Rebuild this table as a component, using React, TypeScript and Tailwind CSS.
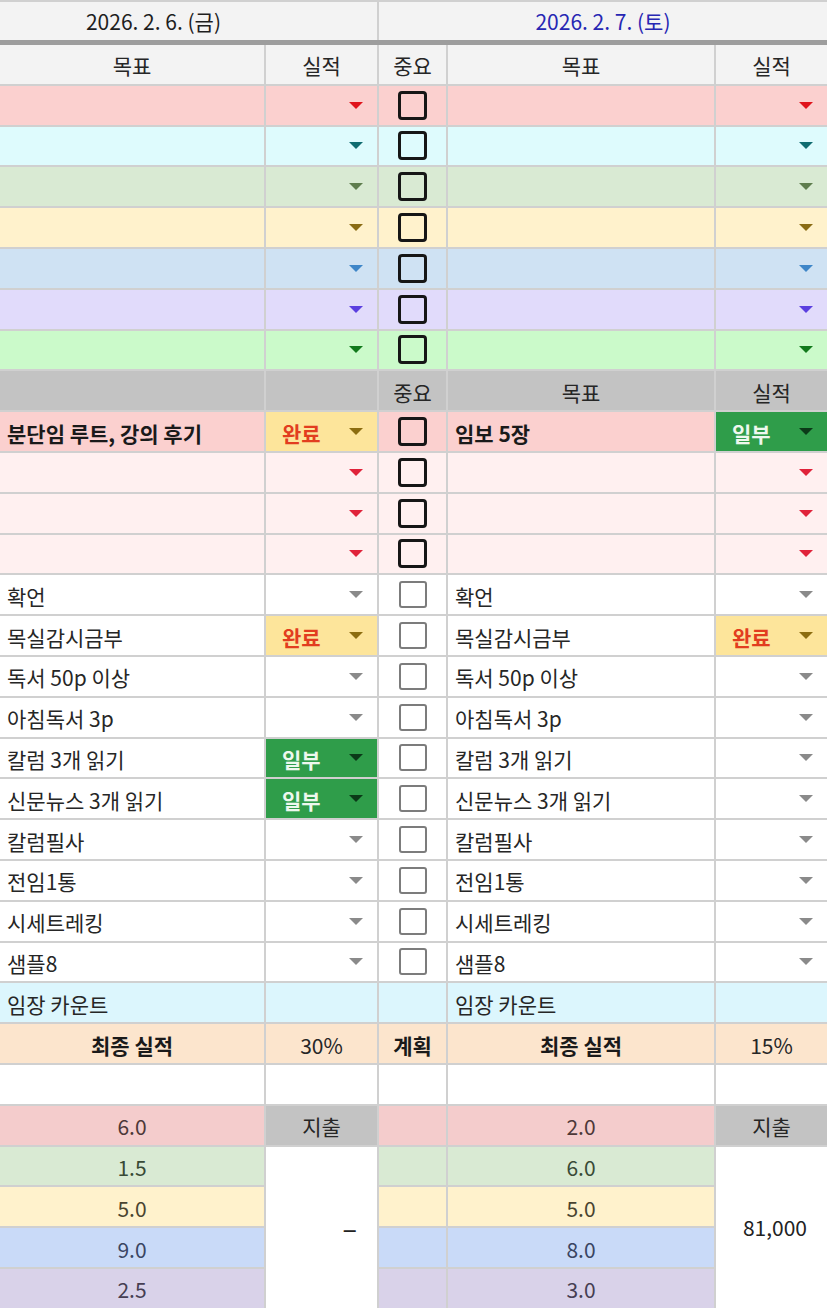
import React from 'react';

type Status = '완료' | '일부' | null;

const FONT = "font-['Noto_Sans_CJK_KR','Noto_Sans',sans-serif]";

const topRows = [
  { bg: 'bg-[#fbd0cf]', arrow: '#e0141c' },
  { bg: 'bg-[#defbfd]', arrow: '#0f6c70' },
  { bg: 'bg-[#d9ead3]', arrow: '#5f7d4e' },
  { bg: 'bg-[#fff2cc]', arrow: '#8a6c14' },
  { bg: 'bg-[#cfe2f3]', arrow: '#3f86c8' },
  { bg: 'bg-[#e1dbfb]', arrow: '#5b3fe0' },
  { bg: 'bg-[#cbfaca]', arrow: '#127a1c' },
];

const tasks: { left: string; ls: Status; right: string; rs: Status }[] = [
  { left: '확언', ls: null, right: '확언', rs: null },
  { left: '목실감시금부', ls: '완료', right: '목실감시금부', rs: '완료' },
  { left: '독서 50p 이상', ls: null, right: '독서 50p 이상', rs: null },
  { left: '아침독서 3p', ls: null, right: '아침독서 3p', rs: null },
  { left: '칼럼 3개 읽기', ls: '일부', right: '칼럼 3개 읽기', rs: null },
  { left: '신문뉴스 3개 읽기', ls: '일부', right: '신문뉴스 3개 읽기', rs: null },
  { left: '칼럼필사', ls: null, right: '칼럼필사', rs: null },
  { left: '전임1통', ls: null, right: '전임1통', rs: null },
  { left: '시세트레킹', ls: null, right: '시세트레킹', rs: null },
  { left: '샘플8', ls: null, right: '샘플8', rs: null },
];

// 하단 시간 기록 (왼쪽 / 오른쪽)
const bottomRows = [
  { bg: 'bg-[#f4cccc]', text: 'text-[#4d3838]', l: '6.0', r: '2.0' },
  { bg: 'bg-[#d9ead3]', text: 'text-[#394a36]', l: '1.5', r: '6.0' },
  { bg: 'bg-[#fff2cc]', text: 'text-[#4a4430]', l: '5.0', r: '5.0' },
  { bg: 'bg-[#c9daf8]', text: 'text-[#3a4562]', l: '9.0', r: '8.0' },
  { bg: 'bg-[#d9d2e9]', text: 'text-[#463e52]', l: '2.5', r: '3.0' },
];

function Arrow({ color }: { color: string }) {
  return (
    <svg width="14" height="7" viewBox="0 0 14 7" className="shrink-0">
      <polygon points="0,0 14,0 7,7" fill={color} />
    </svg>
  );
}

function Check({ dark }: { dark?: boolean }) {
  return dark ? (
    <div className="w-[29px] h-[29px] rounded-[4px] border-[3px] border-[#161616]" />
  ) : (
    <div className="w-[28px] h-[27px] rounded-[3px] border-2 border-[#7c7c7c]" />
  );
}

function StatusCell({ status, bg, arrow }: { status: Status; bg: string; arrow: string }) {
  if (status === '완료') {
    return (
      <div className="flex items-center justify-between bg-[#fde59b] pl-[16px] pr-[14px]">
        <span className="pt-[3px] font-bold text-[#e23d1f]">완료</span>
        <Arrow color="#8c6d10" />
      </div>
    );
  }
  if (status === '일부') {
    return (
      <div className="flex items-center justify-between bg-[#2f9d4a] pl-[16px] pr-[14px]">
        <span className="pt-[3px] font-bold text-[#eef8ee]">일부</span>
        <Arrow color="#0b3a18" />
      </div>
    );
  }
  return (
    <div className={`flex items-center justify-end pr-[14px] ${bg}`}>
      <Arrow color={arrow} />
    </div>
  );
}

function TextCell({ bg, children, bold, center }: { bg: string; children?: React.ReactNode; bold?: boolean; center?: boolean }) {
  return (
    <div
      className={`flex items-center pt-[3px] whitespace-nowrap overflow-hidden ${center ? 'justify-center' : 'pl-[7px]'} ${bold ? 'font-bold text-[#1a1a1a]' : 'text-[#262626]'} ${bg}`}
    >
      {children}
    </div>
  );
}

export default function App() {
  return (
    <div className={`w-[827px] bg-[#d0d0d0] pt-[2px] text-[21px] leading-none ${FONT}`}>
      <div className="grid grid-cols-[377px_448px] gap-x-[2px]">
        <div className="h-[38px] flex items-center justify-center pr-[70px] bg-[#f3f3f3] text-[#1e1e1e]">
          2026. 2. 6. (금)
        </div>
        <div className="h-[38px] flex items-center justify-center bg-[#f3f3f3] text-[#2727b3]">
          2026. 2. 7. (토)
        </div>
      </div>
      <div className="h-[5px] bg-[#9d9d9d]" />

      <div className="grid grid-cols-[264px_111px_67px_266px_111px] auto-rows-[38.8px] gap-[2px]">
        <TextCell bg="bg-[#f3f3f3]" center>목표</TextCell>
        <TextCell bg="bg-[#f3f3f3]" center>실적</TextCell>
        <TextCell bg="bg-[#f3f3f3]" center>중요</TextCell>
        <TextCell bg="bg-[#f3f3f3]" center>목표</TextCell>
        <TextCell bg="bg-[#f3f3f3]" center>실적</TextCell>

        {topRows.map((r, i) => (
          <React.Fragment key={`t${i}`}>
            <div className={r.bg} />
            <StatusCell status={null} bg={r.bg} arrow={r.arrow} />
            <div className={`flex items-center justify-center ${r.bg}`}>
              <Check dark />
            </div>
            <div className={r.bg} />
            <StatusCell status={null} bg={r.bg} arrow={r.arrow} />
          </React.Fragment>
        ))}

        <div className="bg-[#c3c3c3]" />
        <div className="bg-[#c3c3c3]" />
        <TextCell bg="bg-[#c3c3c3]" center>중요</TextCell>
        <TextCell bg="bg-[#c3c3c3]" center>목표</TextCell>
        <TextCell bg="bg-[#c3c3c3]" center>실적</TextCell>

        <TextCell bg="bg-[#fbd0cf]" bold>분단임 루트, 강의 후기</TextCell>
        <StatusCell status="완료" bg="" arrow="" />
        <div className="flex items-center justify-center bg-[#fbd0cf]">
          <Check dark />
        </div>
        <TextCell bg="bg-[#fbd0cf]" bold>임보 5장</TextCell>
        <StatusCell status="일부" bg="" arrow="" />

        {[0, 1, 2].map((i) => (
          <React.Fragment key={`p${i}`}>
            <div className="bg-[#fff0f0]" />
            <StatusCell status={null} bg="bg-[#fff0f0]" arrow="#e0233a" />
            <div className="flex items-center justify-center bg-[#fff0f0]">
              <Check dark />
            </div>
            <div className="bg-[#fff0f0]" />
            <StatusCell status={null} bg="bg-[#fff0f0]" arrow="#e0233a" />
          </React.Fragment>
        ))}

        {tasks.map((t, i) => (
          <React.Fragment key={`w${i}`}>
            <TextCell bg="bg-white">{t.left}</TextCell>
            <StatusCell status={t.ls} bg="bg-white" arrow="#8a8a8a" />
            <div className="flex items-center justify-center bg-white">
              <Check />
            </div>
            <TextCell bg="bg-white">{t.right}</TextCell>
            <StatusCell status={t.rs} bg="bg-white" arrow="#8a8a8a" />
          </React.Fragment>
        ))}

        <TextCell bg="bg-[#dcf6fd]">임장 카운트</TextCell>
        <div className="bg-[#dcf6fd]" />
        <div className="bg-[#dcf6fd]" />
        <TextCell bg="bg-[#dcf6fd]">임장 카운트</TextCell>
        <div className="bg-[#dcf6fd]" />

        <TextCell bg="bg-[#fce5cd]" bold center>최종 실적</TextCell>
        <TextCell bg="bg-[#fce5cd]" center>30%</TextCell>
        <TextCell bg="bg-[#fce5cd]" bold center>계획</TextCell>
        <TextCell bg="bg-[#fce5cd]" bold center>최종 실적</TextCell>
        <TextCell bg="bg-[#fce5cd]" center>15%</TextCell>

        <div className="bg-white" />
        <div className="bg-white" />
        <div className="bg-white" />
        <div className="bg-white" />
        <div className="bg-white" />

        {bottomRows.map((r, i) => (
          <React.Fragment key={`b${i}`}>
            <div className={`col-start-1 flex items-center justify-center pt-[3px] ${r.bg} ${r.text}`}>{r.l}</div>
            {i === 0 && <TextCell bg="bg-[#c3c3c3]" center>지출</TextCell>}
            {i === 1 && (
              <div className="row-span-4 flex items-center justify-end pr-[20px] bg-white text-[#222] text-[27px]">–</div>
            )}
            <div className={`col-start-3 ${r.bg}`} />
            <div className={`col-start-4 flex items-center justify-center pt-[3px] ${r.bg} ${r.text}`}>{r.r}</div>
            {i === 0 && <TextCell bg="bg-[#c3c3c3]" center>지출</TextCell>}
            {i === 1 && (
              <div className="row-span-4 flex items-center justify-end pr-[20px] bg-white text-[#222]">81,000</div>
            )}
          </React.Fragment>
        ))}
      </div>
    </div>
  );
}
